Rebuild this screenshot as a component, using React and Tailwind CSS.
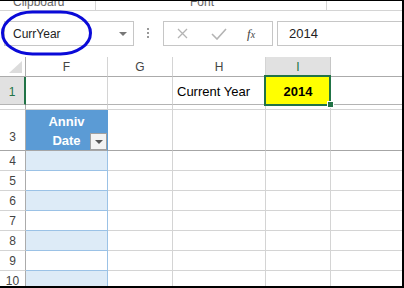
import React from 'react';

const font = { fontFamily: '"Liberation Sans", Arial, sans-serif' };

const rowNums = [4, 5, 6, 7, 8, 9, 10];

const App = () => {
  return (
    <div
      className="relative w-[404px] h-[288px] overflow-hidden bg-white border-t border-r-2 border-b-2 border-black"
      style={font}
    >
      {/* Ribbon group labels (cut off) */}
      <div className="h-[9px] overflow-hidden flex text-[12px] text-[#666]">
        <div className="w-[96px] flex border-r border-[#d4d4d4]">
          <span className="-mt-[6px] leading-[14px] pl-[13px]">Clipboard</span>
          <span className="ml-[17px] -mt-[3px] w-[3px] h-[3px] border-b border-r border-[#888]" />
        </div>
        <div className="w-[231px] flex border-r border-[#d4d4d4]">
          <span className="-mt-[6px] leading-[14px] pl-[94px]">Font</span>
          <span className="ml-[101px] -mt-[3px] w-[3px] h-[3px] border-b border-r border-[#888]" />
        </div>
      </div>

      {/* Formula bar */}
      <div className="h-[47px] border-t border-[#d4d4d4] flex items-start pt-[10px]">
        <div className="ml-[4px] w-[130px] h-[25px] border border-[#c6c6c6] flex items-center pl-[8px] pr-[6px] text-[12px] text-[#222]">
          <span className="flex-1">CurrYear</span>
          <span className="w-0 h-0 border-l-[4px] border-r-[4px] border-t-[4px] border-l-transparent border-r-transparent border-t-[#777]" />
        </div>
        <div className="ml-[13px] mt-[7px] flex flex-col gap-[2px]">
          <span className="w-[2px] h-[2px] bg-[#999]" />
          <span className="w-[2px] h-[2px] bg-[#999]" />
          <span className="w-[2px] h-[2px] bg-[#999]" />
        </div>
        <div className="ml-[14px] w-[110px] h-[25px] border border-[#c6c6c6] flex items-center">
          <svg className="ml-[13px]" width="11" height="11" viewBox="0 0 11 11">
            <path d="M1 1 L10 10 M10 1 L1 10" stroke="#b4b4b4" strokeWidth="1.3" fill="none" />
          </svg>
          <svg className="ml-[23px]" width="16" height="12" viewBox="0 0 16 12">
            <path d="M1 6 L6 11 L15 1" stroke="#b4b4b4" strokeWidth="1.6" fill="none" />
          </svg>
          <span
            className="ml-[20px] text-[13px] italic text-[#444]"
            style={{ fontFamily: '"Liberation Serif", serif' }}
          >
            f<span className="text-[10px]">x</span>
          </span>
        </div>
        <div className="ml-[4px] flex-1 h-[25px] border-t border-l border-b border-[#c6c6c6] flex items-center pl-[11px] text-[13px] text-[#222]">
          2014
        </div>
      </div>

      {/* Column headers */}
      <div className="flex h-[20px] text-[12px] text-[#444]">
        <div className="w-[26px] shrink-0 border-r border-b border-[#ababab] relative">
          <svg className="absolute left-[9px] top-[4px]" width="14" height="12" viewBox="0 0 14 12">
            <path d="M13 0 L13 12 L0 12 Z" fill="#dcdcdc" />
          </svg>
        </div>
        <div className="w-[82px] shrink-0 border-r border-b border-[#d4d4d4] border-b-[#ababab] flex items-center justify-center">F</div>
        <div className="w-[65px] shrink-0 border-r border-b border-[#d4d4d4] border-b-[#ababab] flex items-center justify-center">G</div>
        <div className="w-[93px] shrink-0 border-r border-b border-[#d4d4d4] border-b-[#ababab] flex items-center justify-center">H</div>
        <div className="w-[65px] shrink-0 border-r border-b border-[#c6c6c6] border-b-[#ababab] bg-[#e1e1e1] flex items-center justify-center text-[#217346]">I</div>
        <div className="flex-1 border-b border-[#ababab]" />
      </div>

      {/* Row 1 */}
      <div className="flex h-[28px] text-[13px] text-black">
        <div className="w-[26px] shrink-0 border-r-2 border-r-[#217346] border-b border-b-[#b4b4b4] bg-[#e1e1e1] flex items-center justify-center pt-[3px] text-[12px] text-[#217346]">1</div>
        <div className="w-[82px] shrink-0 border-r border-b border-[#d4d4d4] border-b-[#b4b4b4]" />
        <div className="w-[65px] shrink-0 border-r border-b border-[#d4d4d4] border-b-[#b4b4b4]" />
        <div className="w-[93px] shrink-0 border-r border-b border-[#d4d4d4] border-b-[#b4b4b4] flex items-end pl-[4px] pb-[2px] leading-[20px]">
          Current Year
        </div>
        <div className="w-[65px] shrink-0 border-r border-b border-[#d4d4d4] border-b-[#b4b4b4] bg-[#ffff00] relative flex items-end justify-center pb-[2px] leading-[20px] font-bold">
          2014
          <div className="absolute -left-[2px] -top-[2px] w-[67px] h-[31px] border-2 border-[#217346] z-10" />
          <div className="absolute -right-[4px] -bottom-[4px] w-[7px] h-[7px] bg-[#217346] border border-white z-20" />
        </div>
        <div className="flex-1 border-b border-[#b4b4b4]" />
      </div>

      {/* Row 2 (hidden) */}
      <div className="flex h-[5px]">
        <div className="w-[26px] shrink-0 border-r border-r-[#ababab] border-b border-b-[#d4d4d4]" />
        <div className="w-[82px] shrink-0 border-r border-b border-[#d4d4d4]" />
        <div className="w-[65px] shrink-0 border-r border-b border-[#d4d4d4]" />
        <div className="w-[93px] shrink-0 border-r border-b border-[#d4d4d4]" />
        <div className="w-[65px] shrink-0 border-r border-b border-[#d4d4d4]" />
        <div className="flex-1 border-b border-[#d4d4d4]" />
      </div>

      {/* Row 3 */}
      <div className="flex h-[41px] text-[13px]">
        <div className="w-[26px] shrink-0 border-r border-r-[#ababab] border-b border-b-[#a6a6a6] flex items-end justify-center pb-[4px] text-[12px] text-[#444]">3</div>
        <div className="w-[82px] shrink-0 border-r border-r-[#5b9bd5] border-b border-b-[#a6a6a6] bg-[#5b9bd5] relative flex flex-col items-center justify-end leading-[19px] font-bold text-white">
          <span>Anniv</span>
          <span>Date</span>
          <div className="absolute right-0 bottom-0 w-[17px] h-[17px] bg-[#f3f3f3] border border-[#a0a0a0] flex items-center justify-center">
            <span className="w-0 h-0 border-l-[4px] border-r-[4px] border-t-[4px] border-l-transparent border-r-transparent border-t-[#555]" />
          </div>
        </div>
        <div className="w-[65px] shrink-0 border-r border-r-[#d4d4d4] border-b border-b-[#a6a6a6]" />
        <div className="w-[93px] shrink-0 border-r border-r-[#d4d4d4] border-b border-b-[#a6a6a6]" />
        <div className="w-[65px] shrink-0 border-r border-r-[#d4d4d4] border-b border-b-[#a6a6a6]" />
        <div className="flex-1 border-b border-[#a6a6a6]" />
      </div>

      {/* Rows 4-10 */}
      {rowNums.map((n) => (
        <div key={n} className="flex h-[20px] shrink-0">
          <div className="w-[26px] shrink-0 border-r border-r-[#ababab] border-b border-b-[#d4d4d4] flex items-center justify-center text-[12px] text-[#444]">
            {n}
          </div>
          <div
            className={`w-[82px] shrink-0 border-r border-b border-[#9bc2e6] ${
              n % 2 === 0 ? 'bg-[#ddebf7]' : 'bg-white'
            }`}
          />
          <div className="w-[65px] shrink-0 border-r border-b border-[#d4d4d4]" />
          <div className="w-[93px] shrink-0 border-r border-b border-[#d4d4d4]" />
          <div className="w-[65px] shrink-0 border-r border-b border-[#d4d4d4]" />
          <div className="flex-1 border-b border-[#d4d4d4]" />
        </div>
      ))}

      {/* Blue ellipse annotation */}
      <svg className="absolute left-0 top-[9px]" width="96" height="48" viewBox="0 0 96 48">
        <rect x="2.5" y="2" width="88" height="42" rx="30" ry="21" fill="none" stroke="#0a0ad8" strokeWidth="3" />
      </svg>
    </div>
  );
};

export default App;
